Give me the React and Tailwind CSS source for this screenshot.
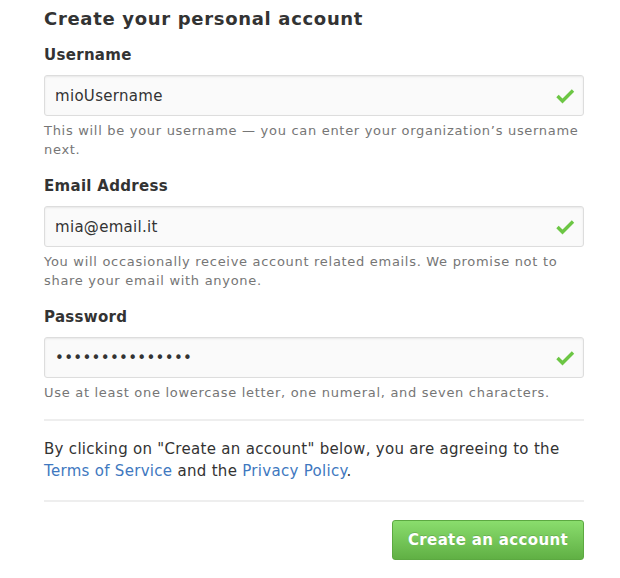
import { useState } from "react";

function Check() {
  return (
    <svg width="20" height="16" viewBox="0 0 20 16" className="absolute right-[9px] top-1/2 -translate-y-1/2">
      <polyline points="2.5,8 7.5,13 18,2.5" fill="none" stroke="#6cc644" strokeWidth="3.4" />
    </svg>
  );
}

function Campo({ label, value, type, aiuto, onChange }) {
  return (
    <div className="mb-[17px]">
      <label className="block text-[15px] tracking-[0.3px] font-bold leading-[20px] text-[#333] mb-[10px]">{label}</label>
      <div className="relative">
        <input
          type={type}
          value={value}
          onChange={onChange}
          className="w-full h-[41px] px-[10px] text-[15px] tracking-[0.3px] text-[#333] bg-[#fafafa] border border-[#ddd] rounded-[3px] shadow-[inset_0_1px_2px_rgba(0,0,0,0.075)] outline-none"
        />
        <Check />
      </div>
      <p className="mt-[5px] text-[13px] tracking-[0.7px] leading-[19px] text-[#767676]">{aiuto}</p>
    </div>
  );
}

export default function App() {
  const [username, setUsername] = useState("mioUsername");
  const [email, setEmail] = useState("mia@email.it");
  const [password, setPassword] = useState("passwordsegreta");

  return (
    <div className="min-h-screen bg-white font-['DejaVu_Sans',sans-serif] text-[#333]">
      <div className="w-[540px] ml-[44px]">
        <h2 className="text-[18px] tracking-[0.68px] font-bold leading-[24px] pt-[7px] mb-[14px]">Create your personal account</h2>

        <Campo
          label="Username"
          value={username}
          type="text"
          onChange={(e) => setUsername(e.target.value)}
          aiuto="This will be your username — you can enter your organization’s username next."
        />
        <Campo
          label="Email Address"
          value={email}
          type="text"
          onChange={(e) => setEmail(e.target.value)}
          aiuto="You will occasionally receive account related emails. We promise not to share your email with anyone."
        />
        <Campo
          label="Password"
          value={password}
          type="password"
          onChange={(e) => setPassword(e.target.value)}
          aiuto="Use at least one lowercase letter, one numeral, and seven characters."
        />

        <div className="border-t-2 border-[#eee] mt-[8px] pt-[17px] pb-[18px]">
          <p className="text-[15px] tracking-[0.3px] leading-[22px]">
            By clicking on "Create an account" below, you are agreeing to the{" "}
            <a href="#" className="text-[#4078c0]">Terms of Service</a> and the{" "}
            <a href="#" className="text-[#4078c0]">Privacy Policy</a>.
          </p>
        </div>

        <div className="border-t-2 border-[#eee] pt-[18px] flex justify-end">
          <button className="h-[40px] px-[15px] text-[15px] tracking-[0.35px] font-bold text-white rounded-[3px] border border-[#5ca941] bg-gradient-to-b from-[#8add6d] to-[#60b044] [text-shadow:0_-1px_0_rgba(0,0,0,0.15)]">
            Create an account
          </button>
        </div>
      </div>
    </div>
  );
}
